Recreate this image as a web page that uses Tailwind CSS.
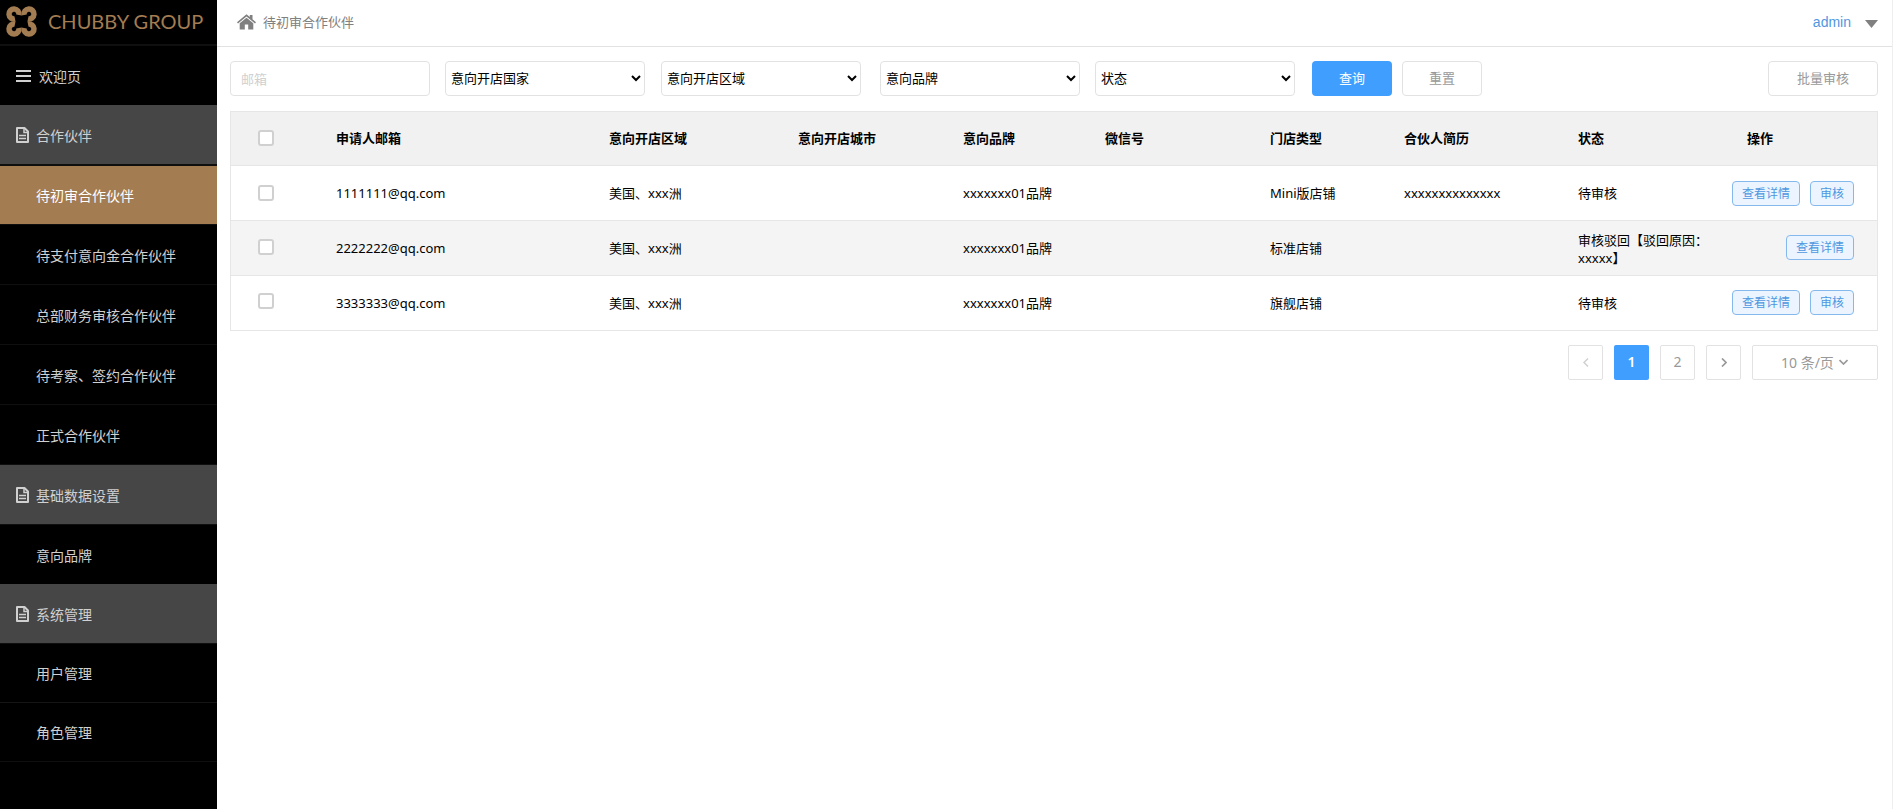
<!DOCTYPE html>
<html lang="zh-CN">
<head>
<meta charset="utf-8">
<meta name="viewport" content="width=device-width, initial-scale=1">
<title>待初审合作伙伴 - Chubby Group</title>
<script src="https://cdn.jsdelivr.net/npm/@tailwindcss/browser@4"></script>
</head>
<body class="flex min-h-screen bg-white text-[13px] text-black font-['Noto_Sans','Noto_Sans_CJK_SC',sans-serif]">

<svg class="hidden" aria-hidden="true">
  <symbol id="i-doc" viewBox="0 0 13 16">
    <path d="M1 1h7.500L12 4.500V15H1Z" fill="none" stroke="currentColor" stroke-width="2" stroke-linejoin="round"/>
    <path d="M8 1v4.500h4" fill="none" stroke="currentColor" stroke-width="1.500"/>
    <path d="M3 8.500h7M3 11.500h7" fill="none" stroke="currentColor" stroke-width="1.500"/>
  </symbol>
</svg>

<aside class="w-[217px] shrink-0 bg-black text-sm text-[#d0d0d0]">
  <a href="#" class="flex h-[46px] items-center border-b-2 border-[#0f0f0f] pl-[6px] pb-[2px] text-[#a37c52]">
    <svg class="size-[31px] shrink-0" viewBox="0 0 31 31" fill="none" stroke="currentColor" stroke-width="5.500" aria-hidden="true">
      <path d="M12.900 9A5 5 0 1 0 9 12.900"/>
      <path d="M12.900 9A5 5 0 1 0 9 12.900" transform="translate(31 0) scale(-1 1)"/>
      <path d="M12.900 9A5 5 0 1 0 9 12.900" transform="translate(31 31) scale(-1 -1)"/>
      <path d="M12.900 9A5 5 0 1 0 9 12.900" transform="translate(0 31) scale(1 -1)"/>
    </svg>
    <span class="ml-[11px] whitespace-nowrap font-['Lato'] text-[20px] leading-[30px]">CHUBBY GROUP</span>
  </a>
  <nav>
    <a href="#" class="flex h-[59px] items-center pt-px pl-4">
      <svg class="h-3 w-[15px]" viewBox="0 0 15 12" fill="currentColor" aria-hidden="true"><path d="M0 0h15v2H0zM0 5h15v2H0zM0 10h15v2H0z"/></svg>
      <span class="ml-2 pt-px">欢迎页</span>
    </a>
    <a href="#" class="flex h-[60px] items-center border-b border-[#0f0f0f] bg-[#464646] pl-4">
      <svg class="h-4 w-[13px]" aria-hidden="true"><use href="#i-doc"/></svg><span class="ml-[7px] pt-0.5">合作伙伴</span>
    </a>
    <a href="#" aria-current="page" class="flex h-[60px] items-center border-y border-[#0f0f0f] bg-[#a37c52] pt-0.5 pl-9 text-white">待初审合作伙伴</a>
    <a href="#" class="flex h-[60px] items-center border-b border-[#0f0f0f] pt-0.5 pl-9">待支付意向金合作伙伴</a>
    <a href="#" class="flex h-[60px] items-center border-b border-[#0f0f0f] pt-0.5 pl-9">总部财务审核合作伙伴</a>
    <a href="#" class="flex h-[60px] items-center border-b border-[#0f0f0f] pt-0.5 pl-9">待考察、签约合作伙伴</a>
    <a href="#" class="flex h-[60px] items-center border-b border-[#0f0f0f] pt-0.5 pl-9">正式合作伙伴</a>
    <a href="#" class="flex h-[60px] items-center border-b border-[#0f0f0f] bg-[#464646] pl-4">
      <svg class="h-4 w-[13px]" aria-hidden="true"><use href="#i-doc"/></svg><span class="ml-[7px] pt-0.5">基础数据设置</span>
    </a>
    <a href="#" class="flex h-[59px] items-center pt-0.5 pl-9">意向品牌</a>
    <a href="#" class="flex h-[60px] items-center border-b border-[#0f0f0f] bg-[#464646] pl-4">
      <svg class="h-4 w-[13px]" aria-hidden="true"><use href="#i-doc"/></svg><span class="ml-[7px] pt-0.5">系统管理</span>
    </a>
    <a href="#" class="flex h-[59px] items-center border-b border-[#151515] pt-0.5 pl-9">用户管理</a>
    <a href="#" class="flex h-[59px] items-center border-b border-[#0f0f0f] pt-0.5 pl-9">角色管理</a>
  </nav>
</aside>

<div class="flex min-w-0 flex-1 flex-col border-r border-[#eeeeee]">
  <header class="flex h-[47px] items-center justify-between border-b border-[#e2e2e2] pr-[14px] pb-2 pt-[6px] pl-5">
    <div class="flex items-center text-[#808080]">
      <svg class="h-4 w-[19px]" viewBox="0 0 19 16" fill="currentColor" aria-hidden="true">
        <path d="M9.500 0.300 12.800 3V1H15.500V5.300L19 8.200 18 9.400 9.500 2.400 1 9.400 0 8.200Z"/>
        <path d="M9.500 3.700 16.300 9.300V15.400H11.200V10.500H7.800V15.400H2.700V9.300Z"/>
      </svg>
      <span class="ml-[7px] pt-0.5">待初审合作伙伴</span>
    </div>
    <button type="button" class="flex items-center text-sm text-[#4f97e0] font-['Liberation_Sans',sans-serif]">admin
      <svg class="ml-[14px] mt-[3px] h-2 w-[13px] text-[#808080]" viewBox="0 0 13 8" fill="currentColor" aria-hidden="true"><path d="M0 0h13L6.500 8z"/></svg>
    </button>
  </header>

  <main class="pr-[14px] pl-[13px] pt-[14px]">
    <form class="flex items-center">
      <input type="text" aria-label="邮箱" placeholder="邮箱" class="h-[35px] w-[200px] rounded border border-[#e2e2e2] px-[10px] placeholder:text-[#d0d0d0]">
      <select aria-label="意向开店国家" class="ml-[15px] h-[35px] w-[200px] rounded border border-[#e2e2e2] bg-white pr-0.5 pb-0.5 pl-px"><option>意向开店国家</option></select>
      <select aria-label="意向开店区域" class="ml-4 h-[35px] w-[200px] rounded border border-[#e2e2e2] bg-white pr-0.5 pb-0.5 pl-px"><option>意向开店区域</option></select>
      <select aria-label="意向品牌" class="ml-[19px] h-[35px] w-[200px] rounded border border-[#e2e2e2] bg-white pr-0.5 pb-0.5 pl-px"><option>意向品牌</option></select>
      <select aria-label="状态" class="ml-[15px] h-[35px] w-[200px] rounded border border-[#e2e2e2] bg-white pr-0.5 pb-0.5 pl-px"><option>状态</option></select>
      <button type="button" class="ml-[17px] h-[35px] w-20 rounded bg-[#409eff] text-white">查询</button>
      <button type="reset" class="ml-[10px] h-[35px] w-20 rounded border border-[#e2e2e2] text-[#999999]">重置</button>
      <button type="button" class="ml-auto h-[35px] w-[110px] rounded border border-[#e2e2e2] text-[#999999]">批量审核</button>
    </form>

    <table class="mt-[15px] w-full table-fixed border-separate border-spacing-0 border-t border-x border-[#e6e6e6] text-left">
      <colgroup>
        <col class="w-[105px]"><col class="w-[273px]"><col class="w-[189px]"><col class="w-[165px]"><col class="w-[142px]">
        <col class="w-[165px]"><col class="w-[134px]"><col class="w-[174px]"><col class="w-[153px]"><col class="w-[146px]">
      </colgroup>
      <thead class="bg-[#f1f1f1]">
        <tr class="h-[54px] *:border-b *:border-[#e6e6e6]">
          <th class="pb-0.5 pl-[27px]"><input type="checkbox" aria-label="全选" class="block size-4 appearance-none rounded-[3px] border-2 border-[#d0d0d0] bg-white checked:bg-[#409eff]"></th>
          <th>申请人邮箱</th><th>意向开店区域</th><th>意向开店城市</th><th>意向品牌</th><th>微信号</th><th>门店类型</th><th>合伙人简历</th><th>状态</th><th class="pl-4">操作</th>
        </tr>
      </thead>
      <tbody>
        <tr class="h-[55px] *:border-b *:border-[#e6e6e6]">
          <td class="pl-[27px]"><input type="checkbox" aria-label="选择 1111111@qq.com" class="block size-4 appearance-none rounded-[3px] border-2 border-[#d0d0d0] bg-white checked:bg-[#409eff]"></td>
          <td class="pt-0.5">1111111@qq.com</td><td class="pt-0.5">美国、xxx洲</td><td></td><td class="pt-0.5">xxxxxxx01品牌</td><td></td><td class="pt-0.5">Mini版店铺</td><td class="pt-0.5">xxxxxxxxxxxxxx</td><td class="pt-0.5">待审核</td>
          <td class="pr-[23px]"><div class="flex justify-end gap-[10px] text-xs text-[#4f97e0]"><button type="button" class="h-[25px] w-[68px] rounded border border-[#85b9ee] bg-[#ecf5ff] pt-px">查看详情</button><button type="button" class="h-[25px] w-11 rounded border border-[#85b9ee] bg-[#ecf5ff] pt-px">审核</button></div></td>
        </tr>
        <tr class="h-[55px] bg-[#f4f4f4] *:border-b *:border-[#e6e6e6]">
          <td class="pb-0.5 pl-[27px]"><input type="checkbox" aria-label="选择 2222222@qq.com" class="block size-4 appearance-none rounded-[3px] border-2 border-[#d0d0d0] bg-white checked:bg-[#409eff]"></td>
          <td class="pt-0.5">2222222@qq.com</td><td class="pt-0.5">美国、xxx洲</td><td></td><td class="pt-0.5">xxxxxxx01品牌</td><td></td><td class="pt-0.5">标准店铺</td><td></td><td class="pt-0.5 leading-[18px]">审核驳回【驳回原因：xxxxx】</td>
          <td class="pr-[23px] pb-0.5"><div class="flex justify-end gap-[10px] text-xs text-[#4f97e0]"><button type="button" class="h-[25px] w-[68px] rounded border border-[#85b9ee] bg-[#ecf5ff] pt-px">查看详情</button></div></td>
        </tr>
        <tr class="h-[55px] *:border-b *:border-[#e6e6e6]">
          <td class="pb-1 pl-[27px]"><input type="checkbox" aria-label="选择 3333333@qq.com" class="block size-4 appearance-none rounded-[3px] border-2 border-[#d0d0d0] bg-white checked:bg-[#409eff]"></td>
          <td class="pt-0.5">3333333@qq.com</td><td class="pt-0.5">美国、xxx洲</td><td></td><td class="pt-0.5">xxxxxxx01品牌</td><td></td><td class="pt-0.5">旗舰店铺</td><td></td><td class="pt-0.5">待审核</td>
          <td class="pr-[23px] pb-0.5"><div class="flex justify-end gap-[10px] text-xs text-[#4f97e0]"><button type="button" class="h-[25px] w-[68px] rounded border border-[#85b9ee] bg-[#ecf5ff] pt-px">查看详情</button><button type="button" class="h-[25px] w-11 rounded border border-[#85b9ee] bg-[#ecf5ff] pt-px">审核</button></div></td>
        </tr>
      </tbody>
    </table>

    <nav aria-label="分页" class="mt-[14px] flex justify-end gap-[11px] text-sm text-[#999999]">
      <button type="button" disabled aria-label="上一页" class="flex size-[35px] items-center justify-center rounded-[2px] border border-[#e2e2e2] text-[#d0d0d0]">
        <svg class="h-[9px] w-[6px]" viewBox="0 0 6 9" fill="none" stroke="currentColor" stroke-width="1.500" aria-hidden="true"><path d="M5 0.500 1 4.500 5 8.500"/></svg>
      </button>
      <button type="button" aria-current="page" class="size-[35px] rounded-[2px] bg-[#409eff] pb-px font-semibold text-white">1</button>
      <button type="button" class="size-[35px] rounded-[2px] border border-[#e2e2e2] pb-px">2</button>
      <button type="button" aria-label="下一页" class="flex size-[35px] items-center justify-center rounded-[2px] border border-[#e2e2e2]">
        <svg class="h-[9px] w-[6px]" viewBox="0 0 6 9" fill="none" stroke="currentColor" stroke-width="1.700" aria-hidden="true"><path d="M1 0.500 5 4.500 1 8.500"/></svg>
      </button>
      <div class="relative">
        <select aria-label="每页条数" class="h-[35px] w-[126px] appearance-none rounded-[2px] border border-[#e2e2e2] bg-white pl-7"><option>10 条/页</option></select>
        <svg class="pointer-events-none absolute right-[30px] top-[14px] h-[6px] w-[9px]" viewBox="0 0 9 6" fill="none" stroke="currentColor" stroke-width="1.700" aria-hidden="true"><path d="M0.500 1 4.500 5 8.500 1"/></svg>
      </div>
    </nav>
  </main>
</div>
</body>
</html>
